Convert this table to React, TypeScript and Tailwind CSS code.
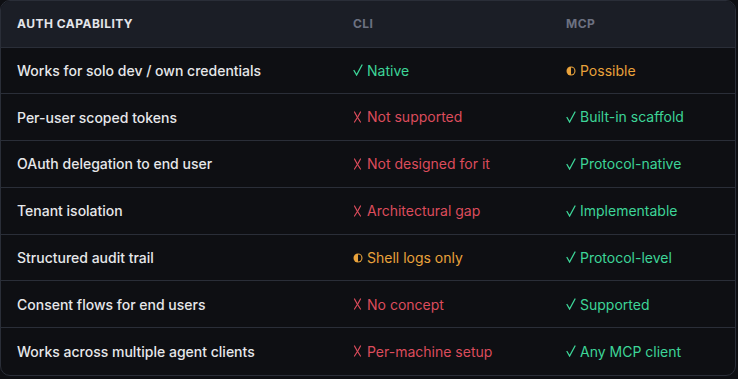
import React from 'react';

type Status = 'yes' | 'no' | 'partial';

const rows: { label: string; cli: [Status, string]; mcp: [Status, string] }[] = [
  { label: 'Works for solo dev / own credentials', cli: ['yes', 'Native'], mcp: ['partial', 'Possible'] },
  { label: 'Per-user scoped tokens', cli: ['no', 'Not supported'], mcp: ['yes', 'Built-in scaffold'] },
  { label: 'OAuth delegation to end user', cli: ['no', 'Not designed for it'], mcp: ['yes', 'Protocol-native'] },
  { label: 'Tenant isolation', cli: ['no', 'Architectural gap'], mcp: ['yes', 'Implementable'] },
  { label: 'Structured audit trail', cli: ['partial', 'Shell logs only'], mcp: ['yes', 'Protocol-level'] },
  { label: 'Consent flows for end users', cli: ['no', 'No concept'], mcp: ['yes', 'Supported'] },
  { label: 'Works across multiple agent clients', cli: ['no', 'Per-machine setup'], mcp: ['yes', 'Any MCP client'] },
];

function Check() {
  return (
    <svg width="10" height="12" viewBox="0 0 10 12" className="mr-[4px] shrink-0" fill="none" stroke="currentColor" strokeWidth="1.3" strokeLinecap="round">
      <path d="M1 6.5 L3.6 11 L9 1" />
    </svg>
  );
}

function Cross() {
  return (
    <svg width="9" height="12" viewBox="0 0 9 12" className="mr-[5px] shrink-0" fill="none" stroke="currentColor" strokeWidth="1.2" strokeLinecap="round">
      <path d="M1.5 1 Q4 6 7.5 11" />
      <path d="M7.5 1 Q5 6 1.5 11" />
    </svg>
  );
}

function Half() {
  return (
    <svg width="10" height="10" viewBox="0 0 10 10" className="mr-[4px] shrink-0">
      <circle cx="5" cy="5" r="4.5" fill="currentColor" />
      <path d="M5 1.6 A3.4 3.4 0 0 1 5 8.4 Z" fill="#0e0f13" />
    </svg>
  );
}

function Cell({ value }: { value: [Status, string] }) {
  const [status, text] = value;
  if (status === 'yes')
    return (
      <span className="inline-flex items-center text-[#3dd598]">
        <Check />
        {text}
      </span>
    );
  if (status === 'no')
    return (
      <span className="inline-flex items-center text-[#dc4c5c]">
        <Cross />
        {text}
      </span>
    );
  return (
    <span className="inline-flex items-center text-[#e9a23b]">
      <Half />
      {text}
    </span>
  );
}

export default function App() {
  return (
    <div className="w-[738px] h-[379px] bg-[#0e0f13] font-['Inter',sans-serif]">
      <div className="w-[736px] rounded-[10px] border border-[#2a2e38] overflow-hidden bg-[#0e0f13]">
        <table className="w-full border-collapse text-left">
          <thead>
            <tr className="bg-[#1b1e26] h-[46px] text-[12px] font-bold uppercase tracking-[0.04em]">
              <th className="w-[336px] pl-4 text-[#e3e5ea]">Auth Capability</th>
              <th className="w-[213px] pl-4 text-[#6c7181]">CLI</th>
              <th className="pl-4 text-[#6c7181]">MCP</th>
            </tr>
          </thead>
          <tbody className="text-[14px]">
            {rows.map((r) => (
              <tr key={r.label} className="h-[46.8px] border-t border-[#2a2e38]">
                <td className="pl-4 font-medium text-[#e6e7ea]">{r.label}</td>
                <td className="pl-4"><Cell value={r.cli} /></td>
                <td className="pl-4"><Cell value={r.mcp} /></td>
              </tr>
            ))}
          </tbody>
        </table>
      </div>
    </div>
  );
}
